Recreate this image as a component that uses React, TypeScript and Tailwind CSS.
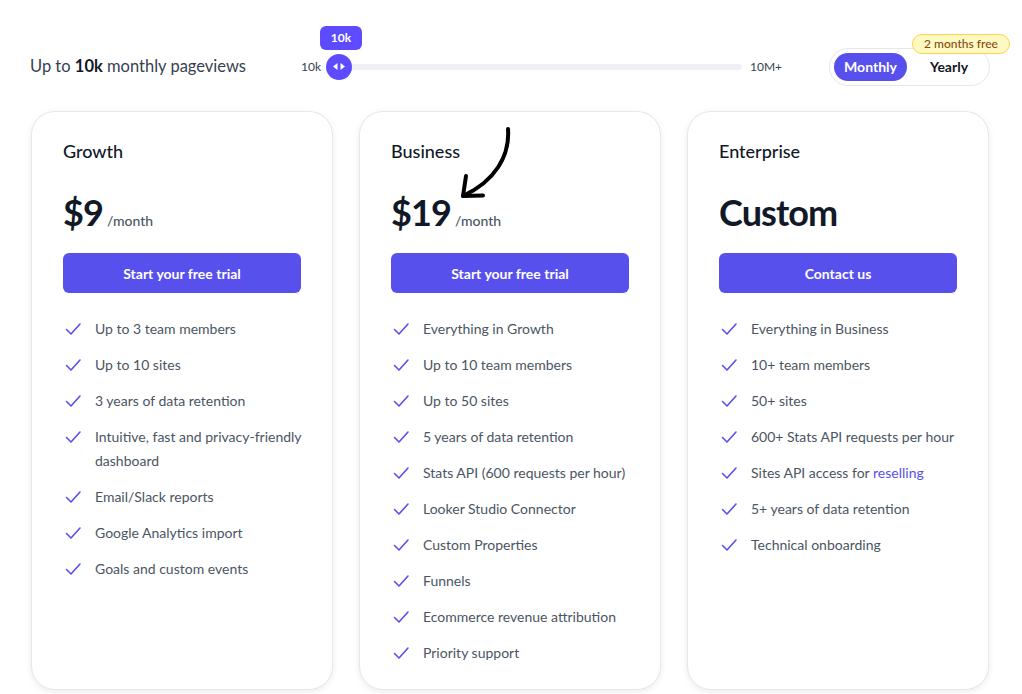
import React from "react";

const Check = () => (
  <svg viewBox="0 0 20 20" className="w-5 h-5 shrink-0 mt-[2px]" fill="none" stroke="#5850ec" strokeWidth="1.6" strokeLinecap="round" strokeLinejoin="round">
    <path d="M3.5 10.5 L8 15 L17 5" />
  </svg>
);

type Feature = React.ReactNode;

const Card = ({
  title,
  price,
  button,
  features,
  arrow,
}: {
  title: string;
  price: React.ReactNode;
  button: string;
  features: Feature[];
  arrow?: boolean;
}) => (
  <div className="relative bg-white rounded-[24px] border border-[#e5e7eb] shadow-[0_2px_6px_rgba(0,0,0,0.08)] pt-[27px] pb-6 px-[31px]">
    {arrow && (
      <svg className="absolute left-[95px] top-[12px]" width="64" height="84" viewBox="0 0 64 84" fill="none" stroke="#000" strokeWidth="4" strokeLinecap="round" strokeLinejoin="round">
        <path d="M53 5 C 55 32, 40 57, 8 72" />
        <path d="M11 52 L8 72 L28 71.5" />
      </svg>
    )}
    <h3 className="text-[18px] leading-6 font-medium text-[#111827]">{title}</h3>
    <div className="mt-[29px] h-10 flex items-end">{price}</div>
    <button className="mt-[21px] w-full h-10 rounded-md bg-[#5850ec] text-white text-[14px] font-bold">
      {button}
    </button>
    <ul className="mt-6 -mr-2 flex flex-col gap-3">
      {features.map((f, i) => (
        <li key={i} className="flex gap-3 text-[14px] leading-6 text-[#4b5563]">
          <Check />
          <span>{f}</span>
        </li>
      ))}
    </ul>
  </div>
);

const Price = ({ amount }: { amount: string }) => (
  <div className="flex items-baseline gap-[4px]">
    <span className="text-[36px] leading-10 font-bold text-[#111827] tracking-tight">{amount}</span>
    <span className="text-[14px] text-[#4b5563] font-medium">/month</span>
  </div>
);

export default function App() {
  return (
    <div className="bg-white min-h-[694px] w-full" style={{ fontFamily: 'Lato, "Noto Sans", sans-serif' }}>
      <div className="w-[959px] ml-[31px]">
        {/* Header */}
        <div className="relative flex items-center h-[111px] pt-[22px]">
          <div className="w-[271px] -ml-[1px] text-[16.5px] text-[#374151]">
            Up to <b className="font-bold text-[#111827]">10k</b> monthly pageviews
          </div>
          <div className="flex items-center">
            <span className="text-[12px] text-[#374151] w-[25px]">10k</span>
            <div className="relative w-[416px] h-[26px] flex items-center">
              <div className="absolute left-[13px] right-0 h-[6px] rounded-full bg-[#eef0f4]" />
              <div className="relative w-[26px] h-[26px] rounded-full bg-[#5f4bff] flex items-center justify-center gap-[2px]">
                <svg width="5" height="7" viewBox="0 0 5 7"><path d="M4.5 0 L0 3.5 L4.5 7Z" fill="#fff" /></svg>
                <svg width="5" height="7" viewBox="0 0 5 7"><path d="M0.5 0 L5 3.5 L0.5 7Z" fill="#fff" /></svg>
              </div>
              <div className="absolute left-[-6px] top-[-28px] w-[42px] h-6 rounded-md bg-[#5f4bff] text-white text-[12px] font-bold flex items-center justify-center">
                10k
              </div>
            </div>
            <span className="ml-2 text-[12px] text-[#374151]">10M+</span>
          </div>
          <div className="ml-auto relative">
            <div className="flex items-center w-[161px] h-[38px] rounded-full border border-[#e5e7eb] pl-[4px]">
              <div className="w-[73px] h-[28px] rounded-full bg-[#5850ec] text-white text-[14px] font-bold flex items-center justify-center">
                Monthly
              </div>
              <div className="flex-1 text-center text-[14px] font-bold text-[#111827] pl-[2px]">Yearly</div>
            </div>
            <div className="absolute left-[83px] top-[-14px] h-5 w-[98px] rounded-full bg-[#fef9c3] border border-[#fcd34d] text-[#854d0e] text-[12px] font-medium flex items-center justify-center whitespace-nowrap">
              2 months free
            </div>
          </div>
        </div>
        {/* Cards */}
        <div className="grid grid-cols-3 gap-[26px] w-[958px]">
          <Card
            title="Growth"
            price={<Price amount="$9" />}
            button="Start your free trial"
            features={[
              "Up to 3 team members",
              "Up to 10 sites",
              "3 years of data retention",
              "Intuitive, fast and privacy-friendly dashboard",
              "Email/Slack reports",
              "Google Analytics import",
              "Goals and custom events",
            ]}
          />
          <Card
            arrow
            title="Business"
            price={<Price amount="$19" />}
            button="Start your free trial"
            features={[
              "Everything in Growth",
              "Up to 10 team members",
              "Up to 50 sites",
              "5 years of data retention",
              "Stats API (600 requests per hour)",
              "Looker Studio Connector",
              "Custom Properties",
              "Funnels",
              "Ecommerce revenue attribution",
              "Priority support",
            ]}
          />
          <Card
            title="Enterprise"
            price={<span className="text-[36px] leading-10 font-bold text-[#111827] tracking-tight">Custom</span>}
            button="Contact us"
            features={[
              "Everything in Business",
              "10+ team members",
              "50+ sites",
              "600+ Stats API requests per hour",
              <>Sites API access for <span className="text-[#5850ec]">reselling</span></>,
              "5+ years of data retention",
              "Technical onboarding",
            ]}
          />
        </div>
      </div>
    </div>
  );
}
